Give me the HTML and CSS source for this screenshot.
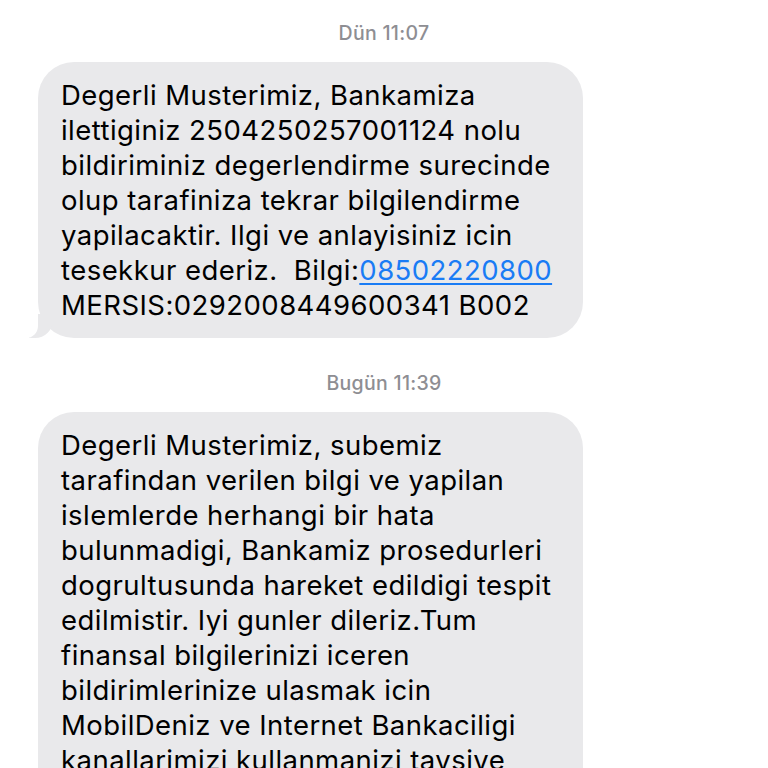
FILE: index.html
```html
<!DOCTYPE html>
<html lang="tr">
<head>
    <meta charset="UTF-8">
    <meta name="viewport" content="width=device-width, initial-scale=1.0">
    <title>Mesajlar</title>
    <link rel="stylesheet" href="styles.css">
</head>
<body>
    <div class="thread">
        <div class="stamp">Dün 11:07</div>
        <div class="bubble bubble-tail">
            Degerli Musterimiz, Bankamiza<br>
            ilettiginiz 2504250257001124 nolu<br>
            bildiriminiz degerlendirme surecinde<br>
            olup tarafiniza tekrar bilgilendirme<br>
            yapilacaktir. Ilgi ve anlayisiniz icin<br>
            tesekkur ederiz.&nbsp; Bilgi:<a href="#">08502220800</a><br>
            MERSIS:0292008449600341 B002
        </div>

        <div class="stamp">Bugün 11:39</div>
        <div class="bubble">
            Degerli Musterimiz, subemiz<br>
            tarafindan verilen bilgi ve yapilan<br>
            islemlerde herhangi bir hata<br>
            bulunmadigi, Bankamiz prosedurleri<br>
            dogrultusunda hareket edildigi tespit<br>
            edilmistir. Iyi gunler dileriz.Tum<br>
            finansal bilgilerinizi iceren<br>
            bildirimlerinize ulasmak icin<br>
            MobilDeniz ve Internet Bankaciligi<br>
            kanallarimizi kullanmanizi tavsiye<br>
            ederiz.
        </div>
    </div>
</body>
</html>
```

FILE: styles.css
```css
body {
    margin: 0;
    background: #fff;
    color: #000;
    font-family: Inter, "Noto Sans", sans-serif;
    overflow: hidden;
}

.thread {
    display: flex;
    flex-direction: column;
    padding: 22px 0 0 38px;
}

.stamp {
    align-self: center;
    margin-left: -38px;
    font-size: 19.5px;
    line-height: 22px;
    font-weight: 500;
    letter-spacing: 0.3px;
    color: #8e8e93;
}

.bubble {
    position: relative;
    align-self: flex-start;
    width: 545px;
    box-sizing: border-box;
    margin: 18px 0 34px;
    padding: 16px 20px 15px 23px;
    background: #e9e9eb;
    border-radius: 36px;
    font-size: 27.5px;
    line-height: 35px;
    letter-spacing: 0.45px;
}

.bubble a {
    color: #1a7cf5;
    text-decoration: underline;
    text-underline-offset: 3px;
    text-decoration-thickness: 2px;
}

.bubble-tail::before {
    content: "";
    position: absolute;
    bottom: 0;
    left: -9px;
    width: 24px;
    height: 24px;
    background: #e9e9eb;
    border-bottom-right-radius: 18px;
}

.bubble-tail::after {
    content: "";
    position: absolute;
    bottom: 0;
    left: -12px;
    width: 12px;
    height: 24px;
    background: #fff;
    border-bottom-right-radius: 12px;
}
```
